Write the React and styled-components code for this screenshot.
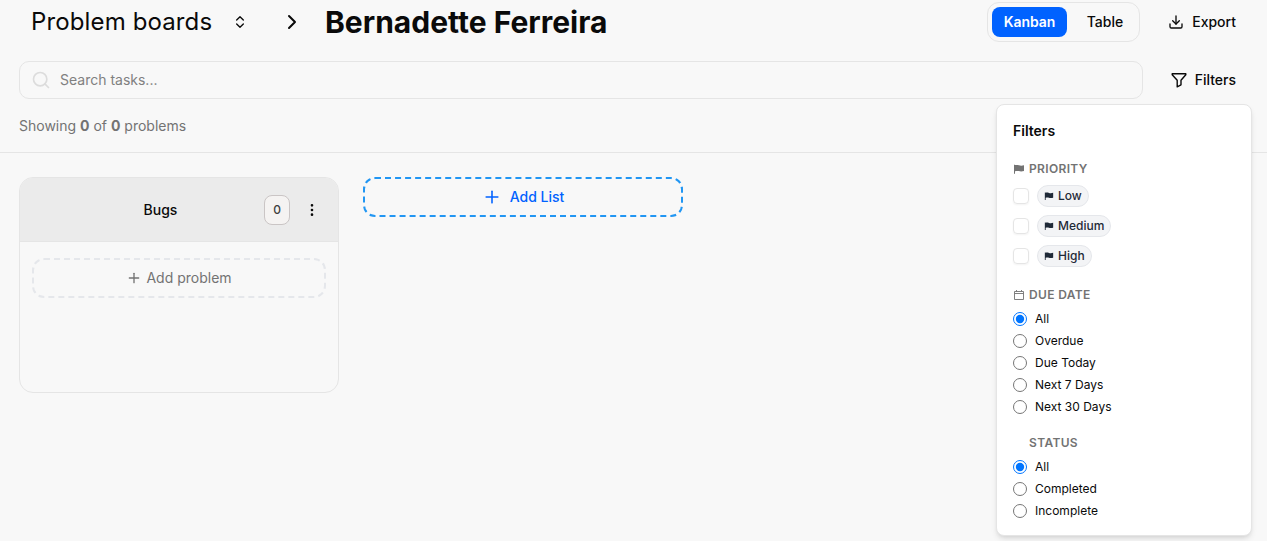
import React from 'react'
import styled, { createGlobalStyle } from 'styled-components'
import { ChevronRight, ChevronsUpDown, Download, EllipsisVertical, Plus, Search } from 'lucide-react'

const GlobalStyle = createGlobalStyle`
	* {
		box-sizing: border-box;
	}
	body {
		margin: 0;
		overflow: hidden;
		background: #f8f8f8;
		color: #0a0a0a;
		font-family: Inter, 'Liberation Sans', sans-serif;
		font-size: 14px;
		line-height: 20px;
	}
	button, input {
		font: inherit;
		color: inherit;
		background: none;
		border: 0;
		margin: 0;
		padding: 0;
	}
	svg {
		flex-shrink: 0;
	}
`

const Page = styled.div`
	height: 541px;
	overflow: hidden;
`

const Top = styled.header`
	height: 153px;
	padding: 2px 19px 0;
	border-bottom: 1px solid #e5e5e5;
`

const TitleRow = styled.div`
	display: flex;
	align-items: center;
	height: 40px;
	padding-left: 12px;
`

const BoardSelect = styled.button`
	display: flex;
	align-items: center;
	width: 217px;
	margin-right: 32px;
	font-size: 24px;
	line-height: 32px;
	letter-spacing: .13px;
	justify-content: space-between;
	white-space: nowrap;
`

const Title = styled.h1`
	margin: 0 0 0 21px;
	font-size: 30px;
	line-height: 36px;
	font-weight: 700;
	white-space: nowrap;
`

const Toggle = styled.div`
	display: flex;
	gap: 8px;
	width: 153px;
	height: 40px;
	margin-left: auto;
	padding: 4px;
	border: 1px solid #e5e5e5;
	border-radius: 12px;
`

const ToggleItem = styled.button`
	flex: ${({ $active }) => ($active ? '0 0 75px' : '0 0 60px')};
	border-radius: 8px;
	font-weight: ${({ $active }) => ($active ? 600 : 500)};
	letter-spacing: ${({ $active }) => ($active ? '-.1px' : '0')};
	background: ${({ $active }) => ($active ? '#0062ff' : 'transparent')};
	color: ${({ $active }) => ($active ? '#fff' : 'inherit')};
`

const Action = styled.button`
	display: flex;
	align-items: center;
	justify-content: flex-end;
	gap: 8px;
	width: 96px;
	margin-right: 12px;
	font-weight: 500;
`

const SearchRow = styled.div`
	display: flex;
	align-items: center;
	margin-top: 19px;
`

const SearchBox = styled.label`
	display: flex;
	flex: 0 0 1124px;
	align-items: center;
	gap: 9px;
	height: 38px;
	padding: 0 11px;
	border: 1px solid #e5e5e5;
	border-radius: 10px;
	svg {
		color: #dcdcdc;
	}
	input {
		flex: 1;
		outline: none;
	}
	input::placeholder {
		color: #808080;
		opacity: 1;
	}
`

const FilterAction = styled(Action)`
	margin-left: auto;
`

const Summary = styled.p`
	margin: 17px 0 0;
	color: #737373;
`

const Board = styled.main`
	display: flex;
	align-items: flex-start;
	gap: 24px;
	padding: 24px 19px;
`

const List = styled.section`
	width: 320px;
	height: 216px;
	overflow: hidden;
	border: 1px solid #e5e5e5;
	border-radius: 14px;
`

const ListHeader = styled.div`
	display: grid;
	grid-template-columns: 1fr 26px 44px;
	align-items: center;
	height: 64px;
	padding: 0 4px 0 37px;
	border-bottom: 1px solid #e5e5e5;
	background: #ebebeb;
	font-weight: 500;
	text-align: center;
	svg {
		justify-self: center;
	}
`

const Count = styled.span`
	height: 30px;
	border: 1px solid #cac5c5;
	border-radius: 8px;
	background: #f5f3f2;
	color: #404040;
	font-size: 12px;
	line-height: 28px;
`

const AddProblem = styled.button`
	display: flex;
	align-items: center;
	justify-content: center;
	gap: 4px;
	width: 294px;
	height: 40px;
	margin: 16px 12px;
	border: 2px dashed #e5e7eb;
	border-radius: 12px;
	color: #737373;
`

const AddList = styled.button`
	display: flex;
	align-items: center;
	justify-content: center;
	gap: 8px;
	width: 320px;
	height: 40px;
	border: 2px dashed #2196f3;
	border-radius: 12px;
	color: #0062ff;
	font-weight: 500;
`

const Panel = styled.aside`
	position: absolute;
	top: 104px;
	left: 996px;
	width: 256px;
	height: 432px;
	padding: 16px;
	border: 1px solid #e5e5e5;
	border-radius: 8px;
	background: #fff;
	box-shadow: 0 4px 6px -1px rgba(0, 0, 0, .1), 0 2px 4px -2px rgba(0, 0, 0, .1);
	h2 {
		margin: 0;
		font-size: 14px;
		font-weight: 600;
	}
`

const Group = styled.section`
	display: grid;
	gap: 8px;
	margin-top: 20px;
`

const GroupTitle = styled.h3`
	display: flex;
	align-items: center;
	gap: 4px;
	margin: 0;
	color: #737373;
	font-size: 12px;
	font-weight: 600;
	line-height: 16px;
	letter-spacing: .35px;
`

const IconSlot = styled.span`
	display: flex;
	width: 12px;
	height: 12px;
`

const Options = styled.div`
	display: grid;
	gap: ${({ $gap }) => $gap};
`

const Option = styled.label`
	display: flex;
	align-items: center;
	gap: 8px;
	font-size: 12px;
	line-height: 16px;
	input {
		width: 14px;
		height: 14px;
		accent-color: #0075ff;
	}
`

const CheckBox = styled.span`
	width: 16px;
	height: 16px;
	border: 1px solid #e5e5e5;
	border-radius: 4px;
	box-shadow: 0 1px 2px rgba(0, 0, 0, .05);
`

const Tag = styled.span`
	display: flex;
	align-items: center;
	gap: 4px;
	height: 22px;
	padding: 0 6px;
	border: 1px solid #e5e7eb;
	border-radius: 11px;
	background: #f3f4f6;
	color: #1f2937;
	font-weight: 500;
`

const Flag = ({ size = 12 }) => (
	<svg width={size} height={size} viewBox='0 0 12 12' fill='currentColor'>
		<path d='M1 1.7h1v.4c1.500-.4 2.700-.2 4 .2 1.600.5 3 .5 5-.1v5.800c-2 .6-3.600.6-5.200.1C4.600 7.800 3.500 7.800 2 8.200v2.600H1z' />
	</svg>
)

const Calendar = () => (
	<svg width='12' height='12' viewBox='0 0 12 12' fill='none' stroke='currentColor' strokeWidth='.9'>
		<path d='M1.500 2.500h9v8h-9zM1.500 4.500h9M3.500 1v1.500M8.500 1v1.500' />
	</svg>
)

const Funnel = () => (
	<svg width='16' height='16' viewBox='0 0 16 16' fill='none' stroke='currentColor' strokeWidth='1.4' strokeLinejoin='round'>
		<path d='M1.200 1.700h13.600v1L10 8.300v4.500L6.200 14.800V8.300L1.200 2.700z' />
	</svg>
)

const priorities = ['Low', 'Medium', 'High']
const dueDates = ['All', 'Overdue', 'Due Today', 'Next 7 Days', 'Next 30 Days']
const statuses = ['All', 'Completed', 'Incomplete']

function RadioGroup({ name, options }) {
	return (
		<Options $gap='6px'>
			{options.map((item, i) => (
				<Option key={item}>
					<input type='radio' name={name} defaultChecked={i === 0} />
					{item}
				</Option>
			))}
		</Options>
	)
}

function FilterPanel() {
	return (
		<Panel>
			<h2>Filters</h2>
			<Group>
				<GroupTitle><IconSlot><Flag /></IconSlot>PRIORITY</GroupTitle>
				<Options $gap='8px'>
					{priorities.map((item) => (
						<Option key={item}>
							<CheckBox />
							<Tag><Flag size={10} />{item}</Tag>
						</Option>
					))}
				</Options>
			</Group>
			<Group>
				<GroupTitle><IconSlot><Calendar /></IconSlot>DUE DATE</GroupTitle>
				<RadioGroup name='due' options={dueDates} />
			</Group>
			<Group>
				<GroupTitle><IconSlot />STATUS</GroupTitle>
				<RadioGroup name='status' options={statuses} />
			</Group>
		</Panel>
	)
}

function App() {
	return (
		<Page>
			<GlobalStyle />
			<Top>
				<TitleRow>
					<BoardSelect>Problem boards <ChevronsUpDown size={16} /></BoardSelect>
					<ChevronRight size={24} />
					<Title>Bernadette Ferreira</Title>
					<Toggle>
						<ToggleItem $active>Kanban</ToggleItem>
						<ToggleItem>Table</ToggleItem>
					</Toggle>
					<Action><Download size={16} />Export</Action>
				</TitleRow>
				<SearchRow>
					<SearchBox>
						<Search size={20} strokeWidth={2} />
						<input placeholder='Search tasks...' />
					</SearchBox>
					<FilterAction><Funnel />Filters</FilterAction>
				</SearchRow>
				<Summary>Showing <b>0</b> of <b>0</b> problems</Summary>
			</Top>
			<Board>
				<List>
					<ListHeader>
						<span>Bugs</span>
						<Count>0</Count>
						<EllipsisVertical size={16} />
					</ListHeader>
					<AddProblem><Plus size={16} />Add problem</AddProblem>
				</List>
				<AddList><Plus size={20} strokeWidth={1.9} />Add List</AddList>
			</Board>
			<FilterPanel />
		</Page>
	)
}

export default App
